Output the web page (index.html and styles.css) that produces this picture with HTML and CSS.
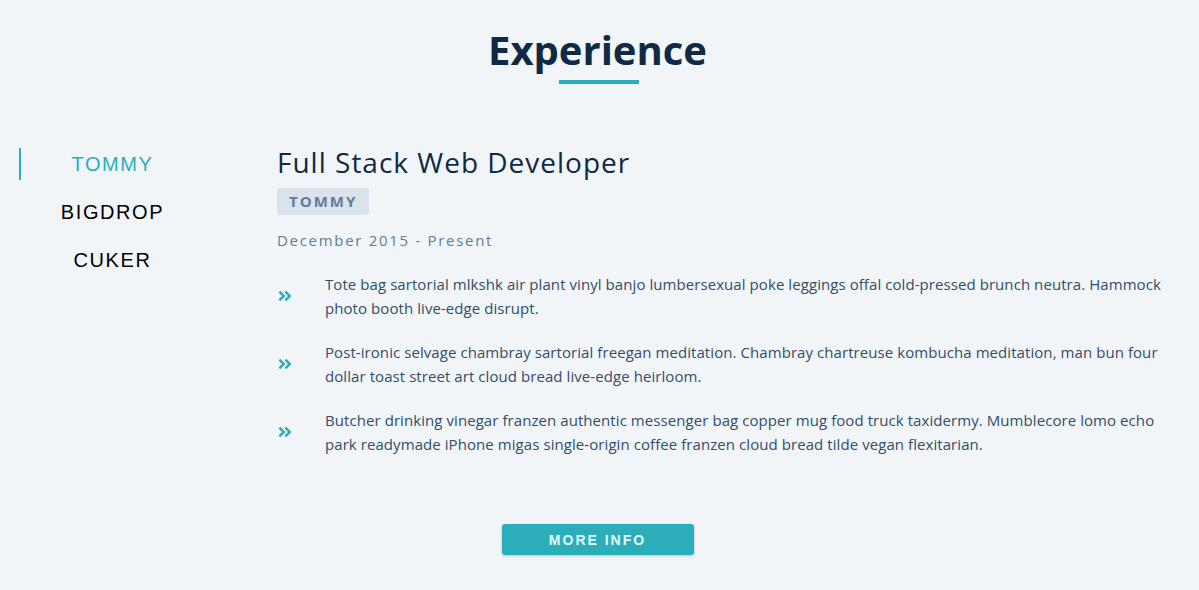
FILE: index.html
```html
<!DOCTYPE html>
<html lang="en">
<head>
<meta charset="utf-8">
<title>Experience</title>
<link rel="stylesheet" href="styles.css">
</head>
<body>
<section class="section">
  <div class="title">
    <h2>Experience</h2>
    <div class="underline"></div>
  </div>
  <div class="jobs-center">
    <div class="btn-container">
      <button class="job-btn active-btn">tommy</button>
      <button class="job-btn">bigdrop</button>
      <button class="job-btn">cuker</button>
    </div>
    <article class="job-info">
      <h3>Full Stack Web Developer</h3>
      <h4>tommy</h4>
      <p class="job-date">December 2015 - Present</p>
      <div class="job-desc">
        <svg class="job-icon" viewBox="0 0 448 512" width="16" height="16"><path fill="currentColor" d="M224.3 273l-136 136c-9.4 9.4-24.6 9.4-33.9 0l-22.6-22.6c-9.4-9.4-9.4-24.6 0-33.9l96.4-96.4-96.4-96.4c-9.4-9.4-9.4-24.6 0-33.9L54.3 103c9.4-9.4 24.6-9.4 33.9 0l136 136c9.5 9.4 9.5 24.6.1 34zm192-34l-136-136c-9.4-9.4-24.6-9.4-33.9 0l-22.6 22.6c-9.4 9.4-9.4 24.6 0 33.9l96.4 96.4-96.4 96.4c-9.4 9.4-9.4 24.6 0 33.9l22.6 22.6c9.4 9.4 24.6 9.4 33.9 0l136-136c9.4-9.2 9.4-24.4 0-33.8z"/></svg>
        <p>Tote bag sartorial mlkshk air plant vinyl banjo lumbersexual poke leggings offal cold-pressed brunch neutra. Hammock photo booth live-edge disrupt.</p>
      </div>
      <div class="job-desc">
        <svg class="job-icon" viewBox="0 0 448 512" width="16" height="16"><path fill="currentColor" d="M224.3 273l-136 136c-9.4 9.4-24.6 9.4-33.9 0l-22.6-22.6c-9.4-9.4-9.4-24.6 0-33.9l96.4-96.4-96.4-96.4c-9.4-9.4-9.4-24.6 0-33.9L54.3 103c9.4-9.4 24.6-9.4 33.9 0l136 136c9.5 9.4 9.5 24.6.1 34zm192-34l-136-136c-9.4-9.4-24.6-9.4-33.9 0l-22.6 22.6c-9.4 9.4-9.4 24.6 0 33.9l96.4 96.4-96.4 96.4c-9.4 9.4-9.4 24.6 0 33.9l22.6 22.6c9.4 9.4 24.6 9.4 33.9 0l136-136c9.4-9.2 9.4-24.4 0-33.8z"/></svg>
        <p>Post-ironic selvage chambray sartorial freegan meditation. Chambray chartreuse kombucha meditation, man bun four dollar toast street art cloud bread live-edge heirloom.</p>
      </div>
      <div class="job-desc">
        <svg class="job-icon" viewBox="0 0 448 512" width="16" height="16"><path fill="currentColor" d="M224.3 273l-136 136c-9.4 9.4-24.6 9.4-33.9 0l-22.6-22.6c-9.4-9.4-9.4-24.6 0-33.9l96.4-96.4-96.4-96.4c-9.4-9.4-9.4-24.6 0-33.9L54.3 103c9.4-9.4 24.6-9.4 33.9 0l136 136c9.5 9.4 9.5 24.6.1 34zm192-34l-136-136c-9.4-9.4-24.6-9.4-33.9 0l-22.6 22.6c-9.4 9.4-9.4 24.6 0 33.9l96.4 96.4-96.4 96.4c-9.4 9.4-9.4 24.6 0 33.9l22.6 22.6c9.4 9.4 24.6 9.4 33.9 0l136-136c9.4-9.2 9.4-24.4 0-33.8z"/></svg>
        <p>Butcher drinking vinegar franzen authentic messenger bag copper mug food truck taxidermy. Mumblecore lomo echo park readymade iPhone migas single-origin coffee franzen cloud bread tilde vegan flexitarian.</p>
      </div>
    </article>
  </div>
  <button class="btn">more info</button>
</section>
</body>
</html>
```

FILE: styles.css
```css
* { box-sizing: border-box; margin: 0; padding: 0; }
html, body { background: #f1f5f8; }
body {
  font-family: "Open Sans", "Noto Sans", sans-serif;
  color: #102a43;
}
.section {
  padding: 24px 29px 34px 19px;
}
.title {
  text-align: center;
}
.title h2 {
  font-size: 40px;
  font-weight: 700;
  letter-spacing: 0;
  line-height: 52px;
  color: #102a43;
  margin-left: 6px;
}
.underline {
  width: 80px;
  height: 4px;
  background: #2caeba;
  margin: 4px auto 0;
  position: relative;
  left: 4px;
}
.jobs-center {
  display: grid;
  grid-template-columns: 187px 1fr;
  column-gap: 71px;
  margin-top: 64px;
}
.btn-container {
  display: flex;
  flex-direction: column;
  align-items: stretch;
  gap: 16px;
}
.job-btn {
  font-family: "Liberation Sans", Arial, sans-serif;
  font-size: 20px;
  letter-spacing: 1.6px;
  text-transform: uppercase;
  background: transparent;
  border: none;
  color: #000;
  line-height: 1;
  height: 32px;
  padding: 0;
  text-align: center;
  cursor: pointer;
}
.active-btn {
  color: #2caeba;
  box-shadow: -2px 0 #2caeba;
  margin-left: 2px;
  padding-right: 2px;
}
.job-info h3 {
  font-size: 28px;
  font-weight: 400;
  letter-spacing: 1px;
  line-height: 32px;
  color: #102a43;
  margin-top: -2px;
}
.job-info h4 {
  display: inline-block;
  font-size: 15px;
  font-weight: 700;
  letter-spacing: 2px;
  text-transform: uppercase;
  color: #617d98;
  background: #dae2ec;
  border-radius: 3px;
  padding: 3px 12px;
  margin-top: 10px;
  line-height: 21px;
}
.job-date {
  font-size: 15px;
  letter-spacing: 1.7px;
  color: #617d98;
  margin-top: 14px;
  line-height: 22px;
}
.job-desc {
  display: grid;
  grid-template-columns: 16px 1fr;
  column-gap: 32px;
  align-items: center;
  margin-top: 20px;
}
.job-desc:first-of-type { margin-top: 21px; }
.job-icon { color: #2caeba; }
.job-desc p {
  font-size: 15px;
  line-height: 24px;
  letter-spacing: 0.07px;
  color: #334e68;
}
.btn {
  display: block;
  width: 192px;
  height: 31px;
  margin: 68px auto 0;
  background: #2caeba;
  color: #e0fcff;
  border: none;
  border-radius: 3px;
  font-family: "Liberation Sans", Arial, sans-serif;
  font-size: 14px;
  font-weight: 700;
  letter-spacing: 2px;
  text-transform: uppercase;
  box-shadow: 0 1px 3px rgba(0,0,0,0.2);
  position: relative;
  left: 3px;
}
```
